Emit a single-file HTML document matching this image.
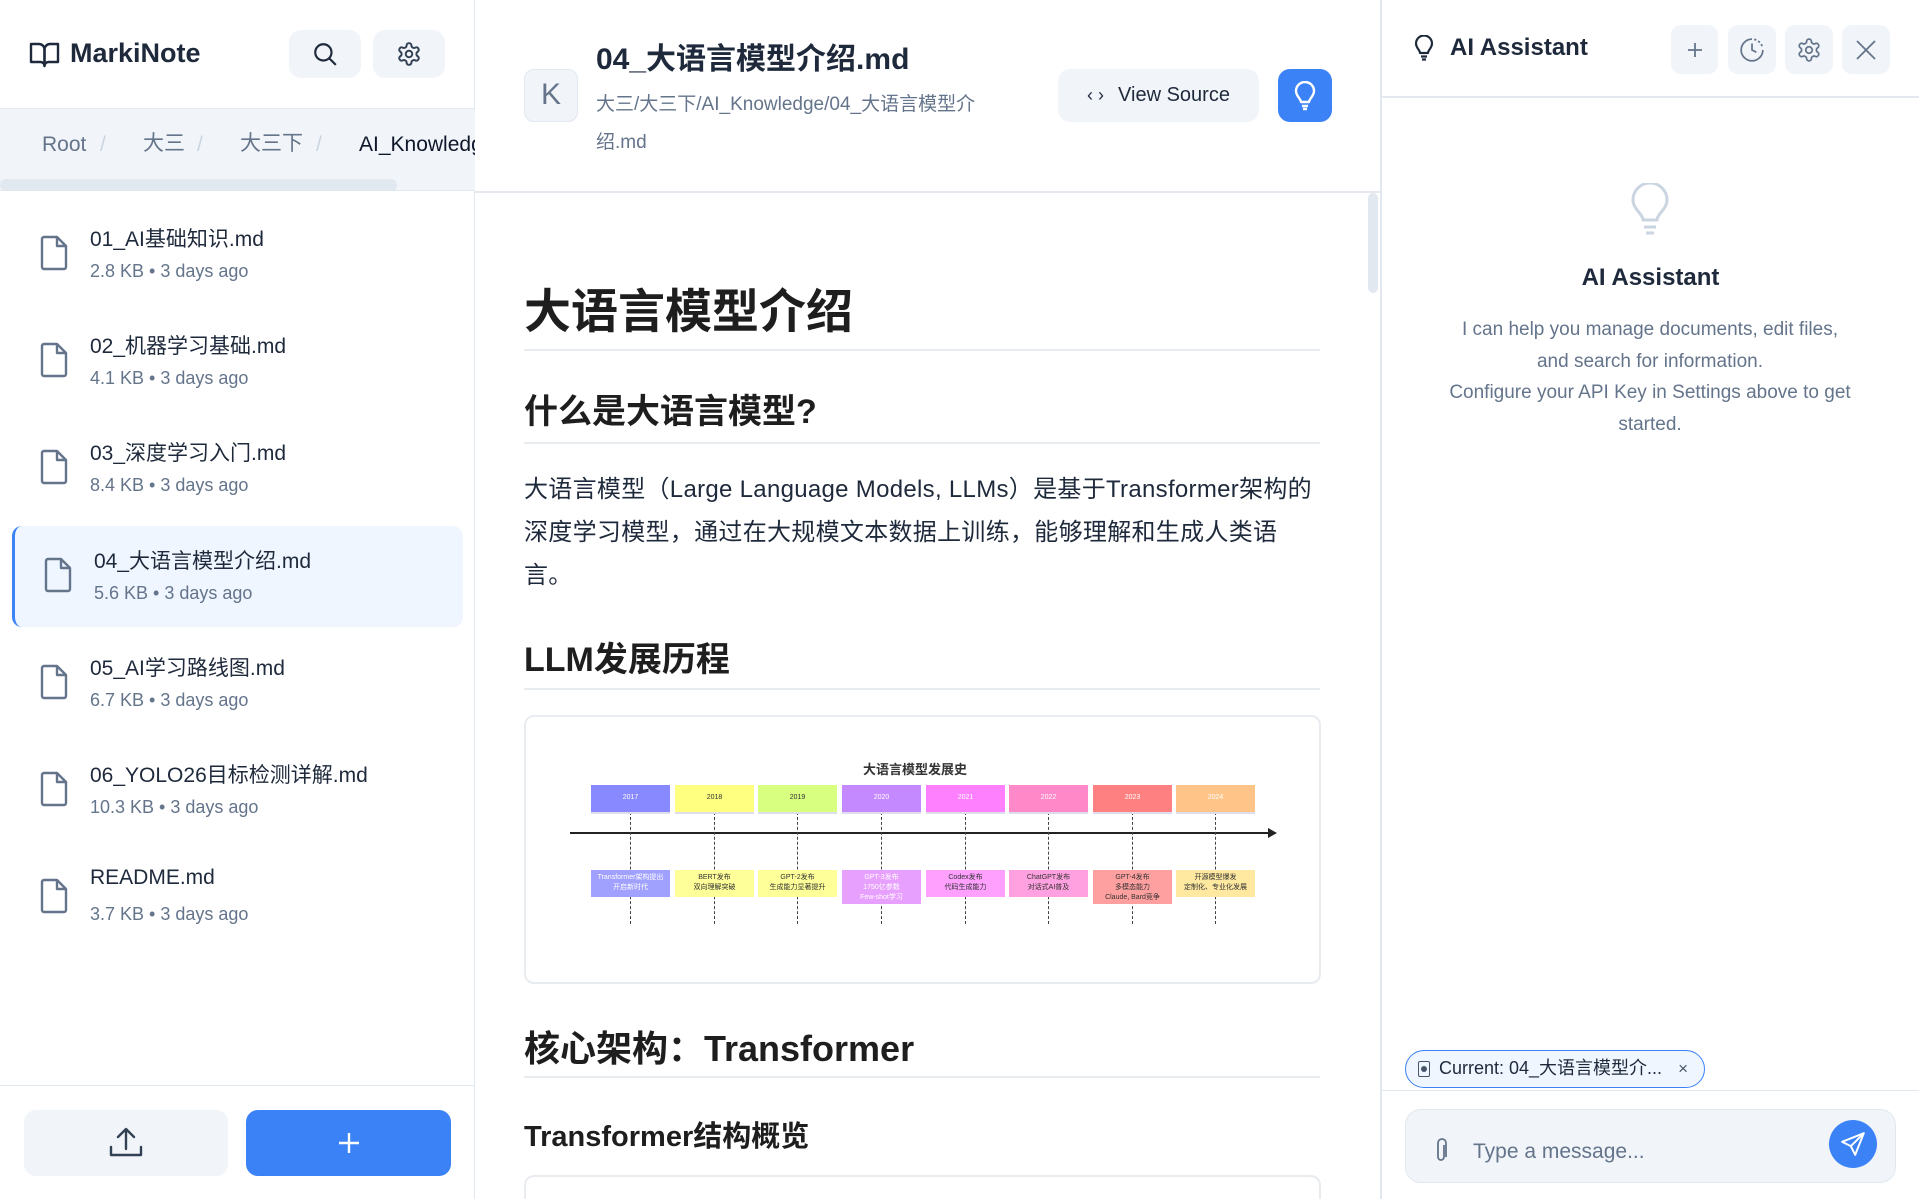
<!DOCTYPE html>
<html><head><meta charset="utf-8"><style>
*{box-sizing:border-box;margin:0;padding:0}
html{overflow:hidden;width:1919px;height:1199px}
body{width:1919px;height:1199px;overflow:hidden;background:#fff;font-family:"Liberation Sans","Noto Sans CJK SC",sans-serif;color:#1e293b;position:relative}
.abs{position:absolute}
.btn{position:absolute;background:#f1f5f9;border-radius:12px;display:flex;align-items:center;justify-content:center}
.file{position:absolute;left:0;width:475px;height:107px}
.file svg{position:absolute;left:40px;top:36px}
.file .t{position:absolute;left:90px;top:24px;font-size:21px;color:#1e293b;white-space:nowrap}
.file .m{position:absolute;left:90px;top:62px;font-size:18px;color:#64748b;white-space:nowrap}
.h{position:absolute;left:524px;width:796px;font-weight:bold;color:#1e1e1e;white-space:nowrap}
.rule{position:absolute;left:524px;width:796px;height:2px;background:#e8ebef}
.yr{position:absolute;top:785px;width:79px;height:27px;font-size:7px;text-align:center;line-height:25px;color:#333;box-shadow:0 2px 0 #dde}
.ev{position:absolute;top:870px;width:79px;font-size:7px;text-align:center;color:#333;padding:3px 2px;line-height:10px}
.dash{position:absolute;width:0;border-left:1px dashed #444;top:812px;height:112px}
.bc{position:absolute;top:22px;line-height:28px;height:28px}
</style></head><body>

<!-- LEFT SIDEBAR -->
<div class="abs" style="left:0;top:0;width:475px;height:1199px;border-right:1px solid #e2e8f0"></div>
<svg class="abs" style="left:29px;top:41px" width="31" height="27" viewBox="0 0 31 27" fill="none" stroke="#1e293b" stroke-width="2.4" stroke-linejoin="round"><path d="M2 3h8a5.5 5.5 0 0 1 5.5 5.5V25a4 4 0 0 0-4-4H2z"/><path d="M29 3h-8a5.5 5.5 0 0 0-5.5 5.5V25a4 4 0 0 1 4-4H29z"/></svg>
<div class="abs" style="left:70px;top:38px;font-size:27px;font-weight:bold;color:#1e293b">MarkiNote</div>
<div class="btn" style="left:289px;top:30px;width:72px;height:48px"><svg width="26" height="26" viewBox="0 0 24 24" fill="none" stroke="#1e293b" stroke-width="2"><circle cx="10.5" cy="10.5" r="7.5"/><path d="M16 16l6 6"/></svg></div>
<div class="btn" style="left:373px;top:30px;width:72px;height:48px"><svg width="26" height="26" viewBox="0 0 24 24" fill="none" stroke="#334155" stroke-width="1.8"><path d="M12.22 2h-.44a2 2 0 0 0-2 2v.18a2 2 0 0 1-1 1.73l-.43.25a2 2 0 0 1-2 0l-.15-.08a2 2 0 0 0-2.73.73l-.22.38a2 2 0 0 0 .73 2.73l.15.1a2 2 0 0 1 1 1.72v.51a2 2 0 0 1-1 1.74l-.15.09a2 2 0 0 0-.73 2.73l.22.38a2 2 0 0 0 2.73.73l.15-.08a2 2 0 0 1 2 0l.43.25a2 2 0 0 1 1 1.73V20a2 2 0 0 0 2 2h.44a2 2 0 0 0 2-2v-.18a2 2 0 0 1 1-1.73l.43-.25a2 2 0 0 1 2 0l.15.08a2 2 0 0 0 2.73-.73l.22-.39a2 2 0 0 0-.73-2.73l-.15-.08a2 2 0 0 1-1-1.74v-.5a2 2 0 0 1 1-1.74l.15-.09a2 2 0 0 0 .73-2.73l-.22-.38a2 2 0 0 0-2.73-.73l-.15.08a2 2 0 0 1-2 0l-.43-.25a2 2 0 0 1-1-1.73V4a2 2 0 0 0-2-2z"/><circle cx="12" cy="12" r="3"/></svg></div>
<div class="abs" style="left:0;top:108px;width:475px;height:83px;background:#f1f5f9;border-top:1px solid #e2e8f0;border-bottom:1px solid #e2e8f0;overflow:hidden;font-size:21px;white-space:nowrap">
 <span class="bc" style="left:42px;color:#64748b">Root</span><span class="bc" style="left:100px;color:#cbd5e1">/</span>
 <span class="bc" style="left:143px;color:#64748b;top:21px">大三</span><span class="bc" style="left:197px;color:#cbd5e1">/</span>
 <span class="bc" style="left:240px;color:#64748b;top:21px">大三下</span><span class="bc" style="left:316px;color:#cbd5e1">/</span>
 <span class="bc" style="left:359px;color:#0f172a">AI_Knowledge</span>
 <div class="abs" style="left:0;top:70px;width:397px;height:12px;border-radius:6px;background:#e2e8f0"></div>
</div>

<div class="file" style="top:199px"><svg width="28" height="36" viewBox="0 0 28 36" fill="none" stroke="#64748b" stroke-width="2.4" stroke-linejoin="round"><path d="M4 2h13l9 9v21a2 2 0 0 1-2 2H4a2 2 0 0 1-2-2V4a2 2 0 0 1 2-2z"/><path d="M17 2v9h9"/></svg><div class="t">01_AI基础知识.md</div><div class="m">2.8 KB • 3 days ago</div></div>
<div class="file" style="top:306px"><svg width="28" height="36" viewBox="0 0 28 36" fill="none" stroke="#64748b" stroke-width="2.4" stroke-linejoin="round"><path d="M4 2h13l9 9v21a2 2 0 0 1-2 2H4a2 2 0 0 1-2-2V4a2 2 0 0 1 2-2z"/><path d="M17 2v9h9"/></svg><div class="t">02_机器学习基础.md</div><div class="m">4.1 KB • 3 days ago</div></div>
<div class="file" style="top:413px"><svg width="28" height="36" viewBox="0 0 28 36" fill="none" stroke="#64748b" stroke-width="2.4" stroke-linejoin="round"><path d="M4 2h13l9 9v21a2 2 0 0 1-2 2H4a2 2 0 0 1-2-2V4a2 2 0 0 1 2-2z"/><path d="M17 2v9h9"/></svg><div class="t">03_深度学习入门.md</div><div class="m">8.4 KB • 3 days ago</div></div>
<div class="abs" style="left:12px;top:526px;width:451px;height:101px;background:#eff6ff;border-radius:10px;border-left:3px solid #3b82f6"></div>
<div class="file" style="top:521px;left:4px"><svg width="28" height="36" viewBox="0 0 28 36" fill="none" stroke="#64748b" stroke-width="2.4" stroke-linejoin="round"><path d="M4 2h13l9 9v21a2 2 0 0 1-2 2H4a2 2 0 0 1-2-2V4a2 2 0 0 1 2-2z"/><path d="M17 2v9h9"/></svg><div class="t">04_大语言模型介绍.md</div><div class="m">5.6 KB • 3 days ago</div></div>
<div class="file" style="top:628px"><svg width="28" height="36" viewBox="0 0 28 36" fill="none" stroke="#64748b" stroke-width="2.4" stroke-linejoin="round"><path d="M4 2h13l9 9v21a2 2 0 0 1-2 2H4a2 2 0 0 1-2-2V4a2 2 0 0 1 2-2z"/><path d="M17 2v9h9"/></svg><div class="t">05_AI学习路线图.md</div><div class="m">6.7 KB • 3 days ago</div></div>
<div class="file" style="top:735px"><svg width="28" height="36" viewBox="0 0 28 36" fill="none" stroke="#64748b" stroke-width="2.4" stroke-linejoin="round"><path d="M4 2h13l9 9v21a2 2 0 0 1-2 2H4a2 2 0 0 1-2-2V4a2 2 0 0 1 2-2z"/><path d="M17 2v9h9"/></svg><div class="t">06_YOLO26目标检测详解.md</div><div class="m">10.3 KB • 3 days ago</div></div>
<div class="file" style="top:842px"><svg width="28" height="36" viewBox="0 0 28 36" fill="none" stroke="#64748b" stroke-width="2.4" stroke-linejoin="round"><path d="M4 2h13l9 9v21a2 2 0 0 1-2 2H4a2 2 0 0 1-2-2V4a2 2 0 0 1 2-2z"/><path d="M17 2v9h9"/></svg><div class="t">README.md</div><div class="m">3.7 KB • 3 days ago</div></div>

<div class="abs" style="left:0;top:1085px;width:475px;height:1px;background:#e2e8f0"></div>
<div class="btn" style="left:24px;top:1110px;width:204px;height:66px"><svg width="36" height="32" viewBox="0 0 36 32" fill="none" stroke="#334155" stroke-width="2.4" stroke-linecap="round" stroke-linejoin="round"><path d="M18 22V3M10 10l8-8 8 8"/><path d="M3 20v8h30v-8"/></svg></div>
<div class="btn" style="left:246px;top:1110px;width:205px;height:66px;background:#3b82f6"><svg width="22" height="22" viewBox="0 0 22 22" stroke="#fff" stroke-width="2.4"><path d="M11 1v20M1 11h20"/></svg></div>

<!-- CENTER -->
<div class="abs" style="left:475px;top:191px;width:905px;height:2px;background:#e5e9ef"></div>
<div class="abs" style="left:524px;top:69px;width:54px;height:53px;background:#f1f5f9;border:1px solid #e2e8f0;border-radius:10px;color:#64748b;font-size:30px;text-align:center;line-height:50px">K</div>
<div class="abs" style="left:596px;top:34px;font-size:30px;font-weight:bold;color:#1e293b;white-space:nowrap">04_大语言模型介绍.md</div>
<div class="abs" style="left:596px;top:86px;width:420px;font-size:19px;line-height:38px;color:#64748b">大三/大三下/AI_Knowledge/04_大语言模型介绍.md</div>
<div class="btn" style="left:1058px;top:69px;width:201px;height:53px"><span style="font-size:20px;color:#1e293b"><span style="font-size:18px;margin-right:14px">‹ ›</span>View Source</span></div>
<div class="btn" style="left:1278px;top:69px;width:54px;height:53px;background:#3b82f6"><svg width="22" height="30" viewBox="0 0 22 30" fill="none" stroke="#fff" stroke-width="2.4" stroke-linejoin="round"><path d="M7 21c0-3-5-6-5-11a9 9 0 0 1 18 0c0 5-5 8-5 11z"/><path d="M8 25h6M9 28h4"/></svg></div>
<div class="abs" style="left:1368px;top:193px;width:10px;height:100px;border-radius:5px;background:#e2e8f0"></div>

<div class="h" style="top:273px;font-size:47px">大语言模型介绍</div>
<div class="rule" style="top:349px"></div>
<div class="h" style="top:384px;font-size:34px">什么是大语言模型?</div>
<div class="rule" style="top:442px"></div>
<div class="abs" style="left:524px;top:468px;width:790px;font-size:24px;line-height:43px;color:#1e293b;letter-spacing:0.3px">大语言模型（Large Language Models, LLMs）是基于Transformer架构的深度学习模型，通过在大规模文本数据上训练，能够理解和生成人类语言。</div>
<div class="h" style="top:632px;font-size:34px">LLM发展历程</div>
<div class="rule" style="top:688px"></div>

<div class="abs" style="left:524px;top:715px;width:797px;height:269px;border:2px solid #e8ebef;border-radius:10px"></div>
<div class="abs" style="left:800px;top:759px;width:230px;text-align:center;font-size:13px;font-weight:bold;color:#333">大语言模型发展史</div>
<div class="abs" style="left:570px;top:832px;width:700px;height:2px;background:#222"></div>
<div class="abs" style="left:1268px;top:828px;width:0;height:0;border-left:9px solid #222;border-top:5px solid transparent;border-bottom:5px solid transparent"></div>

<div class="dash" style="left:630px"></div><div class="dash" style="left:714px"></div><div class="dash" style="left:797px"></div><div class="dash" style="left:881px"></div><div class="dash" style="left:965px"></div><div class="dash" style="left:1048px"></div><div class="dash" style="left:1132px"></div><div class="dash" style="left:1215px"></div>

<div class="yr" style="left:591px;background:#8888ff;color:#fff">2017</div>
<div class="yr" style="left:675px;background:#ffff80">2018</div>
<div class="yr" style="left:758px;background:#d9ff80">2019</div>
<div class="yr" style="left:842px;background:#c488ff;color:#fff">2020</div>
<div class="yr" style="left:926px;background:#ff80ff;color:#fff">2021</div>
<div class="yr" style="left:1009px;background:#ff88c8;color:#fff">2022</div>
<div class="yr" style="left:1093px;background:#ff8080;color:#fff">2023</div>
<div class="yr" style="left:1176px;background:#ffc488;color:#fff">2024</div>

<div class="ev" style="left:591px;background:#a0a0ff;color:#fff;height:27px">Transformer架构提出<br>开启新时代</div>
<div class="ev" style="left:675px;background:#ffff99;height:27px">BERT发布<br>双向理解突破</div>
<div class="ev" style="left:758px;background:#ffff99;height:27px">GPT-2发布<br>生成能力显著提升</div>
<div class="ev" style="left:842px;background:#e8a0ff;color:#fff;height:34px">GPT-3发布<br>1750亿参数<br>Few-shot学习</div>
<div class="ev" style="left:926px;background:#ffa0ff;height:27px">Codex发布<br>代码生成能力</div>
<div class="ev" style="left:1009px;background:#ffa0e0;height:27px">ChatGPT发布<br>对话式AI普及</div>
<div class="ev" style="left:1093px;background:#ffa0a0;height:34px">GPT-4发布<br>多模态能力<br>Claude, Bard竞争</div>
<div class="ev" style="left:1176px;background:#ffe8a0;height:27px">开源模型爆发<br>定制化、专业化发展</div>

<div class="h" style="top:1020px;font-size:36px">核心架构：Transformer</div>
<div class="rule" style="top:1076px"></div>
<div class="h" style="top:1113px;font-size:29px">Transformer结构概览</div>
<div class="abs" style="left:524px;top:1175px;width:797px;height:40px;border:2px solid #e8ebef;border-bottom:none;border-radius:10px 10px 0 0"></div>

<!-- RIGHT PANEL -->
<div class="abs" style="left:1380px;top:0;width:539px;height:1199px;border-left:2px solid #e2e8f0"></div>
<div class="abs" style="left:1382px;top:96px;width:537px;height:2px;background:#e5e9ef"></div>
<svg class="abs" style="left:1414px;top:35px" width="20" height="26" viewBox="0 0 20 26" fill="none" stroke="#1e293b" stroke-width="2.2" stroke-linejoin="round"><path d="M6 18c0-3-4-5-4-9.5a8 8 0 0 1 16 0C18 13 14 15 14 18z"/><path d="M7 21.5h6M8 24.5h4"/></svg>
<div class="abs" style="left:1450px;top:34px;font-size:24px;font-weight:bold;color:#1e293b">AI Assistant</div>
<div class="btn" style="left:1671px;top:25px;width:47px;height:49px;border-radius:10px"><svg width="16" height="16" stroke="#64748b" stroke-width="1.8"><path d="M8 1v14M1 8h14"/></svg></div>
<div class="btn" style="left:1728px;top:25px;width:48px;height:49px;border-radius:10px"><svg width="26" height="26" viewBox="0 0 24 24" fill="none" stroke="#64748b" stroke-width="1.6"><path d="M12 2a10 10 0 1 0 10 10"/><path d="M14 2.2a10 10 0 0 1 7.8 7.8" stroke-dasharray="2 2"/><path d="M12 6v6l4 2"/></svg></div>
<div class="btn" style="left:1785px;top:25px;width:48px;height:49px;border-radius:10px"><svg width="26" height="26" viewBox="0 0 24 24" fill="none" stroke="#64748b" stroke-width="1.6"><path d="M12.22 2h-.44a2 2 0 0 0-2 2v.18a2 2 0 0 1-1 1.73l-.43.25a2 2 0 0 1-2 0l-.15-.08a2 2 0 0 0-2.73.73l-.22.38a2 2 0 0 0 .73 2.73l.15.1a2 2 0 0 1 1 1.72v.51a2 2 0 0 1-1 1.74l-.15.09a2 2 0 0 0-.73 2.73l.22.38a2 2 0 0 0 2.73.73l.15-.08a2 2 0 0 1 2 0l.43.25a2 2 0 0 1 1 1.73V20a2 2 0 0 0 2 2h.44a2 2 0 0 0 2-2v-.18a2 2 0 0 1 1-1.73l.43-.25a2 2 0 0 1 2 0l.15.08a2 2 0 0 0 2.73-.73l.22-.39a2 2 0 0 0-.73-2.73l-.15-.08a2 2 0 0 1-1-1.74v-.5a2 2 0 0 1 1-1.74l.15-.09a2 2 0 0 0 .73-2.73l-.22-.38a2 2 0 0 0-2.73-.73l-.15.08a2 2 0 0 1-2 0l-.43-.25a2 2 0 0 1-1-1.73V4a2 2 0 0 0-2-2z"/><circle cx="12" cy="12" r="3"/></svg></div>
<div class="btn" style="left:1842px;top:25px;width:48px;height:49px;border-radius:10px"><svg width="22" height="22" stroke="#64748b" stroke-width="1.8"><path d="M2 2l18 18M20 2L2 20"/></svg></div>

<svg class="abs" style="left:1630px;top:183px" width="40" height="54" viewBox="0 0 40 54" fill="none" stroke="#cbd5e1" stroke-width="3" stroke-linejoin="round"><path d="M13 37c0-6-10-11-10-20a17 17 0 0 1 34 0c0 9-10 14-10 20z"/><path d="M14 44h12M16 50h8"/></svg>
<div class="abs" style="left:1382px;top:264px;width:537px;text-align:center;font-size:24px;font-weight:bold;color:#1e293b">AI Assistant</div>
<div class="abs" style="left:1445px;top:314px;width:410px;text-align:center;font-size:19px;line-height:31.5px;color:#64748b">I can help you manage documents, edit files, and search for information.<br>Configure your API Key in Settings above to get started.</div>

<div class="abs" style="left:1405px;top:1050px;width:300px;height:38px;border:1.5px solid #3b82f6;border-radius:19px;background:#eff6ff;font-size:18px;color:#1e293b;line-height:35px;padding-left:33px;white-space:nowrap">Current: 04_大语言模型介...<span style="color:#475569;margin-left:16px;font-size:17px">×</span></div>
<div class="abs" style="left:1418px;top:1061px;width:12px;height:16px;border:1.5px solid #475569;border-radius:2px"><div style="width:6px;height:6px;margin:3.5px auto;background:#475569;border-radius:50%"></div></div>
<div class="abs" style="left:1382px;top:1090px;width:537px;height:1px;background:#e2e8f0"></div>
<div class="abs" style="left:1405px;top:1109px;width:491px;height:74px;background:#f1f5f9;border:1px solid #e2e8f0;border-radius:16px"></div>
<svg class="abs" style="left:1434px;top:1138px" width="14" height="26" viewBox="0 0 14 26" fill="none" stroke="#64748b" stroke-width="1.8"><path d="M10 7v12a3 3 0 0 1-6 0V5a4 4 0 0 1 8 0v14"/></svg>
<div class="abs" style="left:1473px;top:1140px;font-size:21px;color:#64748b">Type a message...</div>
<div class="abs" style="left:1829px;top:1120px;width:48px;height:48px;border-radius:50%;background:#3b82f6"></div>
<svg class="abs" style="left:1840px;top:1131px" width="26" height="26" viewBox="0 0 24 24" fill="none" stroke="#fff" stroke-width="1.8" stroke-linejoin="round"><path d="M22 2L2 10l8 4 4 8z"/><path d="M22 2L10 14"/></svg>
</body></html>
